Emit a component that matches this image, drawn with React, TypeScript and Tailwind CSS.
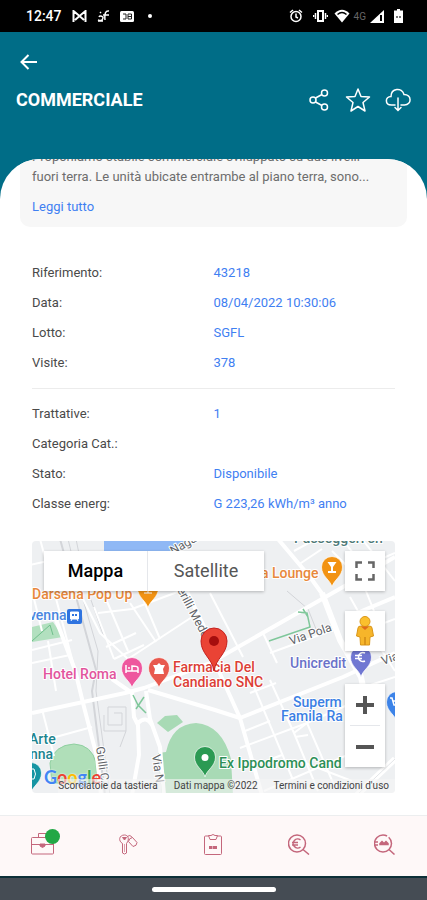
import React, { useState } from 'react';

type Detail = { label: string; value: string };

const GENERAL: Detail[] = [
  { label: 'Riferimento:', value: '43218' },
  { label: 'Data:', value: '08/04/2022 10:30:06' },
  { label: 'Lotto:', value: 'SGFL' },
  { label: 'Visite:', value: '378' },
];

const STATUS: Detail[] = [
  { label: 'Trattative:', value: '1' },
  { label: 'Categoria Cat.:', value: '' },
  { label: 'Stato:', value: 'Disponibile' },
  { label: 'Classe energ:', value: 'G 223,26 kWh/m³ anno' },
];

const MINOR_ROADS = [
  'M8 -2 L22 50 L43 129',
  'M-2 24 L16 20',
  'M0 50 L10 90',
  'M0 109 L40 99',
  'M0 122 L38 114',
  'M16 100 L24 150',
  'M10 168 L22 215',
  'M20 197 L60 186',
  'M48 52 L68 92 L96 118',
  'M62 66 L82 118',
  'M74 58 L96 110',
  'M98 62 L124 101',
  'M112 60 L128 98',
  'M66 72 L100 68 L148 50',
  'M74 106 L104 92',
  'M82 118 L112 104',
  'M96 118 L160 76',
  'M231 92 L245 122',
  'M238 112 L301 89',
  'M178 52 L211 116',
  'M300 10 L330 40 L342 70',
  'M310 -2 L340 36',
  'M330 -2 L363 40',
  'M344 20 L363 12',
  'M318 56 L336 88 L363 130',
  'M336 88 L363 78',
  'M262 10 L284 -2',
  'M266 24 L290 8',
  'M218 136 L261 239',
  'M238 139 L262 192 L286 250',
  'M262 192 L275 182 L302 244',
  'M263 196 L276 194',
  'M208 207 L275 182 L320 162',
  'M220 225 L250 214',
  'M218 152 L244 142',
  'M213 190 L238 180',
  'M232 250 L320 212',
  'M320 150 L363 136',
  'M268 220 L320 240',
];

const MAIN_ROADS = [
  'M23 76 L43 129 L51 162 L65 216 L69 254',
  'M0 172 L93 152 L112 147 L178 122 L311 46 L363 16',
  'M116 149 L183 169 L208 177',
  'M185 126 L208 177 L230 254',
  'M208 177 L311 136 L363 112',
  'M140 20 L180 102',
  'M246 -2 L278 36 L291 54',
  'M325 72 L363 56',
  'M100 150 L102 176 L106 184 L107 214 L100 254',
  'M114 150 L118 178 L128 206 L132 254',
  'M80 138 L100 152',
  'M106 182 Q114 174 120 184',
];

const COLORS = {
  food: '#f29313',
  pink: '#ee579e',
  red: '#e8594e',
  green: '#2b9a53',
  bank: '#7077d2',
  shop: '#3c83e8',
  teal: '#1695a3',
};

function Pin({ x, y, color, children }: { x: number; y: number; color: string; children?: React.ReactNode }) {
  return (
    <g transform={`translate(${x} ${y})`}>
      <path
        d="M0 19 C-1.5 12 -10.5 8.500 -10.500 -1 A10.500 10.500 0 0 1 10.500 -1 C10.500 8.500 1.500 12 0 19Z"
        fill={color}
        stroke="#ffffff"
        strokeWidth="0.7"
      />
      {children}
    </g>
  );
}

function MapCanvas() {
  return (
    <svg
      viewBox="0 0 363 252"
      preserveAspectRatio="xMidYMid slice"
      className="block h-full w-full font-['Roboto',sans-serif]"
      role="img"
      aria-label="Mappa della zona"
    >
      <rect width="363" height="252" fill="#eef0f2" />

      {/* water and parks */}
      <path d="M72 -2 H158 L134 13 H72Z" fill="#8fb8f5" />
      <path d="M0 86 L21 81 L31 96 L0 101Z" fill="#b2e0bf" />
      <path d="M0 100 L18 84 L21 94" fill="none" stroke="#6fbf8b" />
      <path d="M18 222 Q22 204 42 203 Q60 204 64 222 L65 242 H20Z" fill="#b0dfb9" stroke="#8fcfa0" />
      <path d="M125 182 L133 175 L145 174 L151 181 L136 191Z" fill="#a8dab5" />
      <path d="M126 212 L134 211 Q140 183 164 182 Q190 184 199 218 L201 254 H130Z" fill="#a8dab5" />

      {/* railway */}
      <g fill="none" stroke="#d3d5d9">
        <path d="M28 -2 L43 52 L64 129 L60 150 L73 254" strokeWidth="2" />
        <path d="M36 -2 L48 48 L66 110 L64 150 L78 254" />
        <path d="M44 -2 L53 42 L72 96" />
        <path d="M72 174 V190 H94 V166 H76 V184 H90 V172 H82 M94 190 L88 206" />
        <path d="M255 50 L276 68 L284 88" />
      </g>

      <g fill="none" stroke="#ffffff" strokeLinejoin="round">
        {MINOR_ROADS.map(d => (
          <path key={d} d={d} strokeWidth="2" />
        ))}
        {MAIN_ROADS.map(d => (
          <path key={d} d={d} strokeWidth="4" />
        ))}
        <path d="M290 52 L308 99 L329 136 L334 160" strokeWidth="6" />
        <path d="M325 254 L363 218" strokeWidth="6" />
      </g>
      <path d="M325 254 L363 218" fill="none" stroke="#e3e5e8" />

      {/* walking paths */}
      <g fill="none" stroke="#7fc79a" strokeWidth="1.500">
        <path d="M237 100 L278 86 L275 72 L266 71 M271 68 L276 76" />
        <path d="M101 154 L106 164 L114 172 M112 156 L104 168" />
      </g>

      {/* street names */}
      <g fontSize="12" fill="#5f6469" stroke="#ffffff" strokeWidth="2" paintOrder="stroke">
        <text x="141" y="14" transform="rotate(-30 141 14)">Naga</text>
        <text x="145" y="49" transform="rotate(62 145 49)">erilli Mede</text>
        <text x="259" y="104" transform="rotate(-19 259 104)">Via Pola</text>
        <text x="351" y="124" transform="rotate(-19 351 124)">Via</text>
        <text x="120" y="214" transform="rotate(82 120 214)">Via N</text>
        <text x="64" y="206" transform="rotate(82 64 206)">Gulli C</text>
      </g>

      {/* places */}
      <g fontSize="14" fontWeight="500" stroke="#ffffff" strokeWidth="2" paintOrder="stroke" strokeLinejoin="round">
        <text x="262" y="2" fill="#4f7a78">Passeggeri sh</text>
        <text x="0" y="58" fill="#e8883c">Darsena Pop Up</text>
        <text x="229" y="37" fill="#e8883c">a Lounge</text>
        <text x="-3" y="79" fill="#4a86e0">venna</text>
        <text x="11" y="138" fill="#e2559d">Hotel Roma</text>
        <text x="141" y="131" fill="#dc3f37">Farmacia Del</text>
        <text x="141" y="146" fill="#dc3f37">Candiano SNC</text>
        <text x="258" y="127" fill="#6a72c9">Unicredit</text>
        <text x="261" y="166" fill="#3b7fe4">Superm</text>
        <text x="249" y="180" fill="#3b7fe4">Famila Ra</text>
        <text x="187" y="227" fill="#2c8f56">Ex Ippodromo Cand</text>
        <text x="-3" y="203" fill="#20848f">Arte</text>
        <text x="-2" y="218" fill="#20848f">nna</text>
      </g>

      {/* station */}
      <rect x="35" y="68" width="15" height="15" rx="2" fill="#2f74e0" />
      <path d="M38.500 71 H46.500 V78 H38.500Z M39 80 L40 78 M46 80 L45 78" fill="#ffffff" stroke="#ffffff" />
      <path d="M40 74 H45" stroke="#2f74e0" strokeWidth="2" strokeDasharray="2 1" />

      <Pin x={116} y={48} color={COLORS.food}>
        <path d="M-4 4 H4 M0 4 V0" stroke="#ffffff" />
      </Pin>
      <Pin x={300} y={27} color={COLORS.food}>
        <path d="M-4.500 -6 H4.500 L1 -1 V3 H4 V5 H-4 V3 H-1 V-1Z" fill="#ffffff" />
      </Pin>
      <Pin x={100} y={128} color={COLORS.pink}>
        <path d="M-6 -4 V4 M-6 2 H6 V4 M6 2 V-1 Q6 -3 0 -3 V2 M-4 -1 H-2" fill="none" stroke="#ffffff" strokeWidth="1.500" />
      </Pin>
      <Pin x={127} y={128} color={COLORS.red}>
        <path d="M-6 -4 H-2 L0 -6 L2 -4 H6 L4 0 L5 5 H-5 L-4 0Z" fill="#ffffff" />
      </Pin>
      <Pin x={329} y={117} color={COLORS.bank}>
        <path d="M4 -5 A4.500 4.500 0 1 0 4 3 M-6 -2.500 H1 M-6 0.500 H1" fill="none" stroke="#ffffff" strokeWidth="1.500" />
      </Pin>
      <Pin x={365} y={162} color={COLORS.shop}>
        <path d="M-7 -5 H-5 L-3 2 H4 M-4 -2 H5" fill="none" stroke="#ffffff" strokeWidth="1.500" />
      </Pin>
      <Pin x={173} y={217} color={COLORS.green}>
        <circle cx="0" cy="-0.500" r="3.500" fill="#ffffff" />
      </Pin>
      <Pin x={-1} y={233} color={COLORS.teal}>
        <path d="M-3 -5 H3 Q6 0 3 5 H-3Z" fill="none" stroke="#ffffff" />
      </Pin>

      {/* listing marker */}
      <path
        d="M182 130 C180 117 169 113 169 100 A13 13 0 0 1 195 100 C195 113 184 117 182 130Z"
        fill="#ea4335"
        stroke="#c5221f"
      />
      <circle cx="182" cy="100" r="5" fill="#a50e0e" />
    </svg>
  );
}

function GoogleLogo() {
  return (
    <a
      href="#google"
      aria-label="Google"
      className="absolute bottom-1 left-3 font-['Lato',sans-serif] text-lg leading-6 font-bold [text-shadow:0_0_2px_#ffffff]"
    >
      <span className="text-[#4285f4]">G</span>
      <span className="text-[#ea4335]">o</span>
      <span className="text-[#fbbc05]">o</span>
      <span className="text-[#4285f4]">g</span>
      <span className="text-[#34a853]">l</span>
      <span className="text-[#ea4335]">e</span>
    </a>
  );
}

function MapPanel() {
  const [mode, setMode] = useState<'mappa' | 'satellite'>('mappa');
  const control = 'flex size-10 items-center justify-center bg-white shadow-[0_1px_3px_rgba(0,0,0,0.25)]';

  return (
    <section className="relative mx-8 mt-[22px] h-[252px] overflow-hidden rounded-sm">
      <MapCanvas />

      <div className="absolute top-2.5 left-3 flex h-10 bg-white text-lg shadow-[0_1px_3px_rgba(0,0,0,0.25)]">
        <button
          onClick={() => setMode('mappa')}
          className={`w-[104px] border-r border-gray-200 ${mode === 'mappa' ? 'font-medium text-black' : 'text-[#565656]'}`}
        >
          Mappa
        </button>
        <button
          onClick={() => setMode('satellite')}
          className={`w-[116px] ${mode === 'satellite' ? 'font-medium text-black' : 'text-[#565656]'}`}
        >
          Satellite
        </button>
      </div>

      <div className="absolute top-2.5 right-2.5 flex flex-col gap-5">
        <button className={control} aria-label="Schermo intero">
          <svg width="20" height="20" viewBox="0 0 20 20" fill="none" stroke="#666666" strokeWidth="2.500">
            <path d="M1.500 7 V1.500 H7 M13 1.500 H18.500 V7 M18.500 13 V18.500 H13 M7 18.500 H1.500 V13" />
          </svg>
        </button>
        <button className={control} aria-label="Street View">
          <svg width="20" height="30" viewBox="0 0 20 30">
            <path d="M3 12 Q3 10 6 10 H14 Q17 10 17 12 L18.500 20 L15 21 L14.500 29 H5.500 L5 21 L1.500 20Z" fill="#f6b52a" stroke="#d99518" />
            <circle cx="10" cy="5.500" r="5" fill="#fbc02d" stroke="#d99518" />
            <path d="M6 10.500 L10 14 L14 10.500Z" fill="#e06a1c" />
            <path d="M10 21 V29" stroke="#d08b16" strokeWidth="1.500" />
          </svg>
        </button>
      </div>

      <div className="absolute right-2.5 bottom-[26px] flex flex-col items-center bg-white shadow-[0_1px_3px_rgba(0,0,0,0.25)]">
        <button className="flex h-[41px] w-10 items-center justify-center" aria-label="Ingrandisci">
          <svg width="18" height="18" viewBox="0 0 18 18" stroke="#555555" strokeWidth="4">
            <path d="M9 0 V18 M0 9 H18" />
          </svg>
        </button>
        <span className="h-px w-[30px] bg-gray-200" />
        <button className="flex h-[41px] w-10 items-center justify-center" aria-label="Riduci">
          <svg width="18" height="18" viewBox="0 0 18 18" stroke="#555555" strokeWidth="4">
            <path d="M0 9 H18" />
          </svg>
        </button>
      </div>

      <GoogleLogo />
      <div className="absolute right-0 bottom-0 flex h-3.5 items-center gap-4 bg-[#f5f5f5]/60 pr-1.5 text-[10px] leading-none whitespace-nowrap text-[#444444]">
        <button>Scorciatoie da tastiera</button>
        <span>Dati mappa ©2022</span>
        <a href="#termini">Termini e condizioni d'uso</a>
      </div>
    </section>
  );
}

function StatusBar() {
  return (
    <div className="flex h-8 items-center justify-between bg-black pr-6 pl-[26px] text-white">
      <div className="flex items-center gap-2.5">
        <span className="text-sm font-medium">12:47</span>
        <svg width="15" height="12" viewBox="0 0 15 12" fill="none" stroke="#ffffff" strokeWidth="2">
          <path d="M1.500 12 V1 L7.500 6 L13.500 1 V12 M3 10 L7.500 6 L12 10" />
        </svg>
        <svg width="13" height="12" viewBox="0 0 13 12" fill="none" stroke="#ffffff" strokeWidth="1.500">
          <path d="M1 10 Q6 12 6 7 Q3 5 2 7 M3 2 L4 3 M12 1 Q7 0 8 10 M6 5 H12 M1 11 H6" />
        </svg>
        <svg width="14" height="11" viewBox="0 0 14 11">
          <rect width="14" height="11" rx="1.500" fill="#ffffff" />
          <path d="M3 3 H6 V8 H3 M8 3 H11.500 V8 H8Z M8 5.500 H11" fill="none" stroke="#222222" />
        </svg>
        <span className="ml-1 size-1 rounded-full bg-white" />
      </div>

      <div className="flex items-center">
        <svg width="14" height="14" viewBox="0 0 14 14" fill="none" stroke="#ffffff" strokeWidth="1.500">
          <circle cx="7" cy="7.500" r="5" />
          <path d="M7 4.500 V8 L9 9 M1 3.500 L4 1 M13 3.500 L10 1" />
        </svg>
        <svg className="ml-2.5" width="15" height="12" viewBox="0 0 15 12" fill="none" stroke="#ffffff" strokeWidth="2">
          <rect x="5" y="1" width="5" height="10" />
          <path d="M2.500 3 V9 M12.500 3 V9 M0.500 5 V7 M14.500 5 V7" strokeWidth="1.500" />
        </svg>
        <svg className="ml-1.5" width="16" height="14" viewBox="0 0 16 14">
          <path d="M0.500 4.500 Q8 -3 15.500 4.500 L8 13.500Z" fill="#ffffff" />
          <path d="M3.500 5.500 Q8 1.500 12.500 5.500" fill="none" stroke="#000000" strokeWidth="1.500" />
        </svg>
        <span className="ml-1 text-[10px] text-[#666666]">4G</span>
        <svg className="ml-1" width="14" height="13" viewBox="0 0 14 13">
          <path d="M0 13 L14 0 V13Z" fill="#ffffff" />
          <path d="M11 5 V11" stroke="#000000" strokeWidth="2" />
        </svg>
        <svg className="ml-2.5" width="9" height="14" viewBox="0 0 9 14">
          <path d="M3 0 H6 V1.500 H9 V14 H0 V1.500 H3Z" fill="#ffffff" />
          <path d="M2 8 H7" stroke="#777777" strokeWidth="2" strokeDasharray="2 1" />
        </svg>
      </div>
    </div>
  );
}

function Header() {
  return (
    <header className="px-4 pt-[18px] pb-[45px] text-white">
      <button className="flex h-6 items-center pl-1" aria-label="Indietro">
        <svg width="17" height="16" viewBox="0 0 17 16" fill="none" stroke="#ffffff" strokeWidth="2">
          <path d="M17 8 H1.500 M8.500 1 L1.500 8 L8.500 15" />
        </svg>
      </button>
      <div className="mt-3 flex h-7 items-center justify-between">
        <h1 className="text-lg font-bold">COMMERCIALE</h1>
        <div className="flex items-center gap-3.5">
          <button aria-label="Condividi">
            <svg width="22" height="24" viewBox="0 0 22 24" fill="none" stroke="#ffffff" strokeWidth="1.500">
              <circle cx="4" cy="12" r="3" />
              <circle cx="15.500" cy="5" r="3" />
              <circle cx="15.500" cy="19" r="3" />
              <path d="M6.500 10 L13 6.500 M6.500 14 L13 17.500" />
            </svg>
          </button>
          <button aria-label="Preferiti">
            <svg width="26" height="26" viewBox="0 0 26 26" fill="none" stroke="#ffffff" strokeWidth="1.500" strokeLinejoin="round">
              <path d="M13 2 L16 9.500 L24.500 10 L18 15.500 L20 24 L13 19.500 L6 24 L8 15.500 L1.500 10 L10 9.500Z" />
            </svg>
          </button>
          <button aria-label="Scarica">
            <svg width="26" height="24" viewBox="0 0 26 24" fill="none" stroke="#ffffff" strokeWidth="1.500" strokeLinecap="round">
              <path d="M10 17 H6.500 C-0.500 17 0 8.500 6 8.500 C6 0 17 -1 19 6.500 C27 6.500 27 17 19.500 17 H16" />
              <path d="M13 10 V22 M10 19.500 L13 22.500 L16 19.500" />
            </svg>
          </button>
        </div>
      </div>
    </header>
  );
}

function DetailList({ items }: { items: Detail[] }) {
  return (
    <dl className="mx-8">
      {items.map(item => (
        <div key={item.label} className="grid h-[30px] grid-cols-2 items-center">
          <dt className="text-[#4a4a4a]">{item.label}</dt>
          <dd className="whitespace-nowrap text-[#3f80f2]">{item.value}</dd>
        </div>
      ))}
    </dl>
  );
}

function BottomNav() {
  const item = 'flex items-center justify-center';
  return (
    <nav className="grid h-[61px] grid-cols-5 border-t border-[#eceeef] bg-[#fef8f8] pb-1 text-[#c4677c]">
      <button className={item} aria-label="Immobili">
        <span className="relative">
          <svg width="23" height="22" viewBox="0 0 23 22" fill="none" stroke="currentColor">
            <rect x="0.500" y="4.500" width="22" height="16.500" rx="1" />
            <path d="M7.500 4 V0.500 H15.500 V4 M0.500 11.500 H9 M14 11.500 H22.500" />
            <path d="M9 11 H14 V13 L11.500 14.500 L9 13Z" fill="currentColor" />
          </svg>
          <span className="absolute -top-1 -right-1.5 size-[15px] rounded-full bg-[#22a745]" />
        </span>
      </button>
      <button className={item} aria-label="Chiavi">
        <svg width="19" height="21" viewBox="0 0 19 21" fill="none" stroke="currentColor">
          <path d="M3.500 9.500 C-1 7 0 1 5.500 1 C9 1 11 5 7.500 9.500 V19 L5.500 20 L3.500 19Z" />
          <path d="M8 2.500 Q11 0 13.500 3.500 L18 8.500 Q18 12 14 12.500 L9.500 7.500 Q10 4 13.500 3.500" />
          <path d="M3.500 3.500 H7.500 L5.500 6Z" fill="currentColor" />
          <path d="M5.500 10 V18" strokeOpacity="0.6" />
        </svg>
      </button>
      <button className={item} aria-label="Attività">
        <svg width="18" height="21" viewBox="0 0 18 21" fill="none" stroke="currentColor">
          <rect x="0.500" y="2" width="17" height="18.500" rx="1" />
          <path d="M4.500 1.500 H7 Q9 -0.500 11 1.500 H13.500 L12 5.500 H6Z" fill="#fef8f8" />
          <path d="M5 13.500 H8.500 M9 13.500 H13" strokeWidth="3" />
        </svg>
      </button>
      <button className={item} aria-label="Valutazioni">
        <svg width="22" height="21" viewBox="0 0 22 21" fill="none" stroke="currentColor" strokeWidth="1.500">
          <circle cx="9" cy="9.500" r="8.500" />
          <path d="M15 15.500 L21 20.500 M12.500 6 A4.500 4.500 0 1 0 12.500 13 M4 8.500 H10 M4 11 H10" />
        </svg>
      </button>
      <button className={item} aria-label="Ricerca immobili">
        <svg width="21" height="21" viewBox="0 0 21 21" fill="none" stroke="currentColor" strokeWidth="1.500">
          <circle cx="9" cy="9.500" r="8.500" strokeDasharray="44 2" />
          <path d="M15 15.500 L20.500 20.500" />
          <path d="M1 8 H4 M1 11 H4" />
          <path d="M6 10.500 V9.500 L8 7.500 L10 9.500 L12 7.500 L14 9.500 V10.500Z" fill="currentColor" />
        </svg>
      </button>
    </nav>
  );
}

const App: React.FC = () => {
  return (
    <div className="flex min-h-screen flex-col bg-[#006d87] font-['Roboto',sans-serif]">
      <StatusBar />
      <Header />

      <main className="flex-1 overflow-hidden rounded-t-[40px] bg-white pb-[22px] text-[13px] leading-5">
        <section className="mx-5 -mt-3 rounded-b-[10px] bg-[#f7f7f7] px-3 pb-2.5">
          <p className="text-[#6d6d6d]">
            <span className="block whitespace-nowrap">Proponiamo stabile commerciale sviluppato su due livelli</span>
            fuori terra. Le unità ubicate entrambe al piano terra, sono...
          </p>
          <button className="mt-2.5 block text-[#3f80f2]">Leggi tutto</button>
        </section>

        <div className="mt-[31px]">
          <DetailList items={GENERAL} />
          <hr className="mx-8 my-2.5 border-[#ececec]" />
          <DetailList items={STATUS} />
        </div>

        <MapPanel />
      </main>

      <BottomNav />
      <div className="flex h-6 items-center justify-center border-t-2 border-[#0d3038] bg-[#454c54]">
        <span className="h-[5px] w-[124px] rounded-full bg-white" />
      </div>
    </div>
  );
};

export default App;
